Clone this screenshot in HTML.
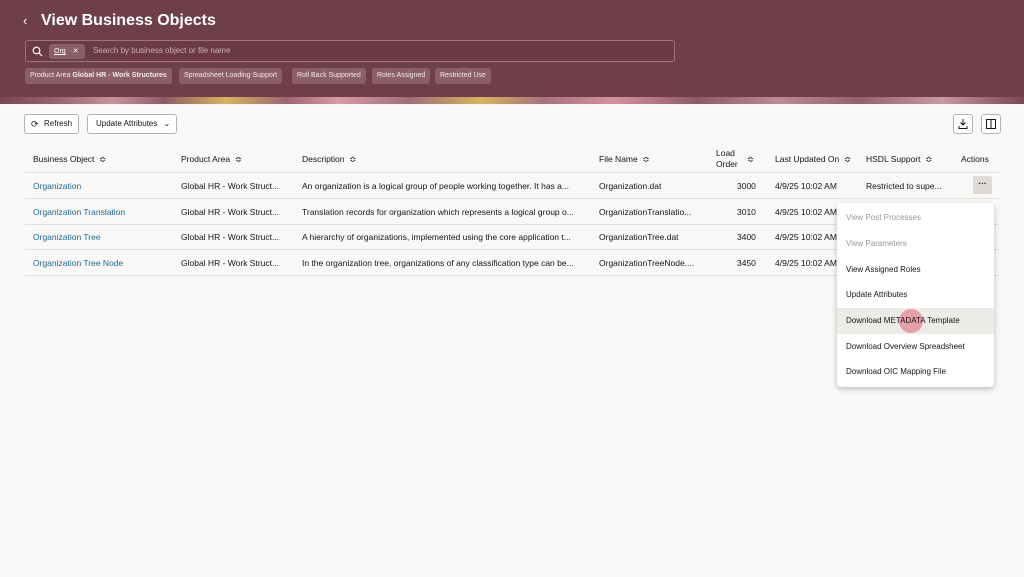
<!DOCTYPE html>
<html><head><meta charset="utf-8"><style>
*{box-sizing:border-box;margin:0;padding:0}
body{width:1024px;height:577px;overflow:hidden;background:#f9f8f6;font-family:"Liberation Sans",sans-serif;font-size:8.5px;color:#161513;position:relative}
.hdr{position:absolute;left:0;top:0;width:1024px;height:98px;background:#6e3f4b}
.band{position:absolute;left:0;top:97px;width:1024px;height:7px;background:linear-gradient(90deg,#7a4653 0,#9c6670 6%,#c9939c 11%,#8e5a66 16%,#d9b35e 22%,#9d6470 28%,#d99aa5 33%,#a06d77 40%,#d8b45c 47%,#a9707d 53%,#d6909d 60%,#8d5b66 68%,#b98b93 76%,#94606b 84%,#c79aa2 92%,#7a4653 100%)}
.abs{position:absolute;white-space:nowrap}
.title{left:41px;top:12px;color:#fff;font-size:16px;font-weight:bold}
.search{left:25px;top:40px;width:650px;height:22px;border:1px solid #9a7480;border-radius:3px;background:#6a3b47}
.chip{position:absolute;top:68px;height:16px;background:#8b5f69;border-radius:3px;color:#f3e9eb;font-size:7px;line-height:16px;padding:0 5px;white-space:nowrap}
.btn{position:absolute;top:114px;height:20px;border:1px solid #b5b2ad;border-radius:3px;background:#fff;font-size:8px;line-height:18px;padding:0 8px;white-space:nowrap}
.ib{position:absolute;top:114px;width:20px;height:20px;border:1px solid #b5b2ad;border-radius:3px;background:#fff}
.th{top:154px;font-size:8.5px;color:#161513}
.line{position:absolute;left:25px;width:974px;height:1px;background:#e4e1dc}
a{color:#1a6b9a;text-decoration:none}
.menu{position:absolute;left:837px;top:203px;width:157px;height:184px;background:#fff;border-radius:4px;box-shadow:0 2px 6px rgba(0,0,0,.25)}
.mi{position:absolute;left:9px;font-size:8px;color:#161513;white-space:nowrap}
.r{top:181px}
</style></head><body>
<div class="hdr"></div><div class="band"></div>
<div class="abs" style="left:23px;top:13px;color:#fff;font-size:13px">‹</div>
<div class="abs title">View Business Objects</div>
<div class="abs search">
<svg style="position:absolute;left:6px;top:5px" width="11" height="11" viewBox="0 0 11 11"><circle cx="4.5" cy="4.5" r="3.3" fill="none" stroke="#fff" stroke-width="1.2"/><path d="M7 7l3 3" stroke="#fff" stroke-width="1.2"/></svg>
<div style="position:absolute;left:23px;top:3px;width:36px;height:15px;background:#8b5f69;border-radius:3px;color:#fff;font-size:7px;line-height:15px;padding-left:5px"><u>Org</u> <span style="margin-left:5px">✕</span></div>
<div style="position:absolute;left:67px;top:5px;color:#c9afb5;font-size:8px">Search by business object or file name</div>
</div>
<div class="chip" style="left:25px">Product Area <b>Global HR - Work Structures</b></div>
<div class="chip" style="left:179px">Spreadsheet Loading Support</div>
<div class="chip" style="left:292px">Roll Back Supported</div>
<div class="chip" style="left:372px">Roles Assigned</div>
<div class="chip" style="left:435px">Restricted Use</div>

<div class="btn" style="left:24px;width:55px;padding-left:19px">Refresh<span class="abs" style="left:6px;top:0;font-size:9px">⟳</span></div>
<div class="btn" style="left:87px;width:90px">Update Attributes <span style="margin-left:4px">⌄</span></div>
<div class="ib" style="left:953px"><svg width="18" height="18" viewBox="0 0 18 18"><path d="M9 4v6M6.5 7.5L9 10l2.5-2.5M5 11v2.5h8V11" fill="none" stroke="#161513" stroke-width="1"/></svg></div>
<div class="ib" style="left:981px"><svg width="18" height="18" viewBox="0 0 18 18"><rect x="4.5" y="4.5" width="9" height="9" fill="none" stroke="#161513"/><path d="M9 4.5v9" stroke="#161513"/></svg></div>

<div class="abs th" style="left:33px">Business Object &nbsp;≎</div>
<div class="abs th" style="left:181px">Product Area &nbsp;≎</div>
<div class="abs th" style="left:302px">Description &nbsp;≎</div>
<div class="abs th" style="left:599px">File Name &nbsp;≎</div>
<div class="abs" style="left:716px;top:148px;line-height:11px">Load<br>Order</div><div class="abs th" style="left:747px">≎</div>
<div class="abs th" style="left:775px">Last Updated On &nbsp;≎</div>
<div class="abs th" style="left:866px">HSDL Support &nbsp;≎</div>
<div class="abs th" style="left:961px">Actions</div>
<div class="line" style="top:172px"></div>

<div class="abs r" style="left:33px"><a>Organization</a></div>
<div class="abs r" style="left:181px">Global HR - Work Struct...</div>
<div class="abs r" style="left:302px">An organization is a logical group of people working together. It has a...</div>
<div class="abs r" style="left:599px">Organization.dat</div>
<div class="abs r" style="left:737px">3000</div>
<div class="abs r" style="left:775px">4/9/25 10:02 AM</div>
<div class="abs r" style="left:866px">Restricted to supe...</div>
<div class="abs" style="left:973px;top:176px;width:19px;height:18px;background:#dedbd6;border-radius:2px;text-align:center;line-height:14px;font-weight:bold">···</div>
<div class="line" style="top:198px"></div>

<div class="abs" style="left:33px;top:207px"><a>Organization Translation</a></div>
<div class="abs" style="left:181px;top:207px">Global HR - Work Struct...</div>
<div class="abs" style="left:302px;top:207px">Translation records for organization which represents a logical group o...</div>
<div class="abs" style="left:599px;top:207px">OrganizationTranslatio...</div>
<div class="abs" style="left:737px;top:207px">3010</div>
<div class="abs" style="left:775px;top:207px">4/9/25 10:02 AM</div>
<div class="line" style="top:224px"></div>

<div class="abs" style="left:33px;top:232px"><a>Organization Tree</a></div>
<div class="abs" style="left:181px;top:232px">Global HR - Work Struct...</div>
<div class="abs" style="left:302px;top:232px">A hierarchy of organizations, implemented using the core application t...</div>
<div class="abs" style="left:599px;top:232px">OrganizationTree.dat</div>
<div class="abs" style="left:737px;top:232px">3400</div>
<div class="abs" style="left:775px;top:232px">4/9/25 10:02 AM</div>
<div class="line" style="top:249px"></div>

<div class="abs" style="left:33px;top:258px"><a>Organization Tree Node</a></div>
<div class="abs" style="left:181px;top:258px">Global HR - Work Struct...</div>
<div class="abs" style="left:302px;top:258px">In the organization tree, organizations of any classification type can be...</div>
<div class="abs" style="left:599px;top:258px">OrganizationTreeNode....</div>
<div class="abs" style="left:737px;top:258px">3450</div>
<div class="abs" style="left:775px;top:258px">4/9/25 10:02 AM</div>
<div class="line" style="top:275px"></div>

<div class="menu">
<div class="mi" style="top:10px;color:#9b9893">View Post Processes</div>
<div class="mi" style="top:36px;color:#9b9893">View Parameters</div>
<div class="mi" style="top:62px">View Assigned Roles</div>
<div class="mi" style="top:87px">Update Attributes</div>
<div style="position:absolute;left:0;top:105px;width:157px;height:26px;background:#edebe8"></div>
<div style="position:absolute;left:62px;top:106px;width:24px;height:24px;border-radius:50%;background:rgba(225,130,140,.7)"></div>
<div class="mi" style="top:113px">Download METADATA Template</div>
<div class="mi" style="top:139px">Download Overview Spreadsheet</div>
<div class="mi" style="top:164px">Download OIC Mapping File</div>
</div>
</body></html>
